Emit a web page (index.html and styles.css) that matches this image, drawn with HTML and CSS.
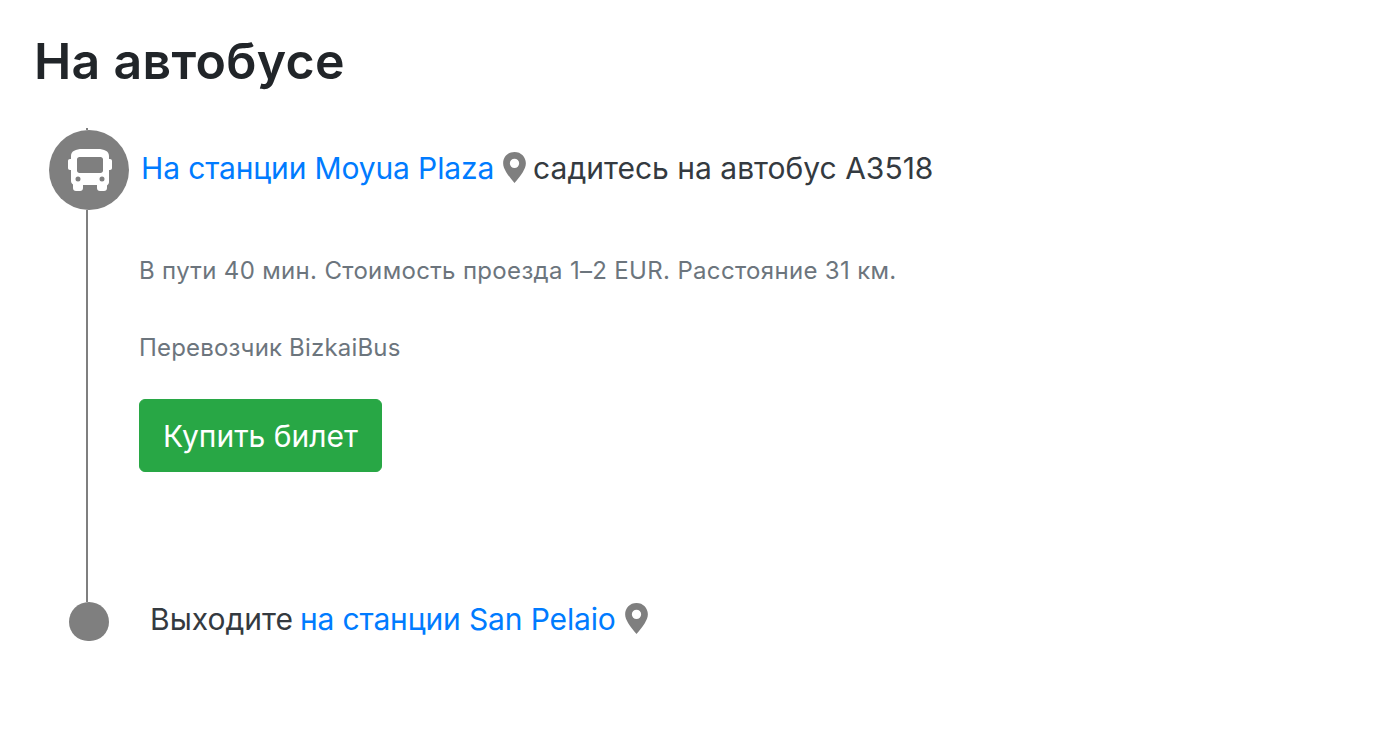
FILE: index.html
```html
<!DOCTYPE html>
<html lang="ru">
<head>
<meta charset="utf-8">
<title>На автобусе</title>
<link rel="stylesheet" href="styles.css">
</head>
<body>
<main class="page">
  <h1 class="title">На автобусе</h1>
  <section class="route">
    <div class="rail">
      <span class="stub"></span>
      <span class="stop">
        <svg class="bus" viewBox="0 0 44 42" width="44" height="42" aria-hidden="true">
          <path fill="#fff" fill-rule="evenodd" d="M14 0h16c6 0 11 2 11 7v3h1c1.200 0 2 .8 2 2v7c0 1.200-.8 2-2 2h-1v12c0 1.600-.8 2.800-2 3.400V39c0 1.800-1.200 3-3 3h-4c-1.800 0-3-1.200-3-3v-3H15v3c0 1.800-1.200 3-3 3H8c-1.800 0-3-1.200-3-3v-3.600c-1.200-.6-2-1.800-2-3.400V21H2c-1.200 0-2-.8-2-2v-7c0-1.200.8-2 2-2h1V7c0-5 5-7 11-7zM11.500 8C10 8 9 9 9 10.500v11C9 23 10 24 11.500 24h21c1.500 0 2.500-1 2.500-2.500v-11C35 9 34 8 32.500 8zM10 27.500a2.500 2.500 0 1 0 0 5 2.500 2.500 0 0 0 0-5zm24 0a2.500 2.500 0 1 0 0 5 2.500 2.500 0 0 0 0-5z"/>
        </svg>
      </span>
      <span class="line"></span>
      <span class="end"></span>
    </div>
    <div class="content">
      <p class="step step-first"><a class="link">На станции Moyua Plaza</a>
        <svg class="pin" viewBox="1 1 22 30" width="23" height="31" aria-hidden="true"><path fill="#7f7f7f" fill-rule="evenodd" d="M12 1C5.600 1 1 5.800 1 12c0 3 1.200 5.600 3 8.500 2.200 3.500 5.300 7.300 8 10.500 2.700-3.200 5.800-7 8-10.500 1.800-2.900 3-5.500 3-8.500C23 5.800 18.400 1 12 1zm0 6.500a4.500 4.500 0 1 1 0 9 4.500 4.500 0 0 1 0-9z"/></svg>
        садитесь на автобус A3518</p>
      <p class="note note-time">В пути 40 мин. Стоимость проезда 1–2 EUR. Расстояние 31 км.</p>
      <p class="note note-carrier">Перевозчик BizkaiBus</p>
      <a class="buy">Купить билет</a>
      <p class="step step-last">Выходите <a class="link">на станции San Pelaio</a>
        <svg class="pin" viewBox="1 1 22 30" width="23" height="31" aria-hidden="true"><path fill="#7f7f7f" fill-rule="evenodd" d="M12 1C5.600 1 1 5.800 1 12c0 3 1.200 5.600 3 8.500 2.200 3.500 5.300 7.300 8 10.500 2.700-3.200 5.800-7 8-10.500 1.800-2.900 3-5.500 3-8.500C23 5.800 18.400 1 12 1zm0 6.500a4.500 4.500 0 1 1 0 9 4.500 4.500 0 0 1 0-9z"/></svg></p>
    </div>
  </section>
</main>
</body>
</html>
```

FILE: styles.css
```css
* { box-sizing: border-box; }
html, body { margin: 0; background: #fff; }
body {
  font-family: Inter, "Noto Sans", sans-serif;
  color: #343a40;
  overflow: hidden;
}
.page { height: 731px; padding: 31px 0 0 34px; }
.title {
  margin: 0;
  font-size: 50px;
  line-height: 60px;
  font-weight: 600;
  letter-spacing: 0.3px;
  color: #212529;
}
.route {
  display: flex;
  margin: 37px 0 0 15px;
  height: 513px;
}
.rail {
  width: 80px;
  flex: none;
  display: flex;
  flex-direction: column;
}
.stub { width: 2px; height: 2px; margin-left: 37px; background: #7f7f7f; flex: none; }
.stop {
  width: 80px;
  height: 80px;
  flex: none;
  border-radius: 50%;
  background: #7f7f7f;
  display: flex;
  align-items: center;
  justify-content: center;
}
.bus { margin-left: 1px; }
.line { width: 2px; flex: 1; margin-left: 37px; background: #7f7f7f; }
.end {
  width: 40px;
  height: 39px;
  flex: none;
  margin-left: 20px;
  border-radius: 20px 20px 19px 19px;
  background: #7f7f7f;
}
.content { flex: 1; min-width: 0; padding-left: 10px; }
.step {
  margin: 0;
  font-size: 30px;
  line-height: 40px;
  display: flex;
  align-items: center;
  gap: 7px;
  white-space: nowrap;
}
.step-first { padding: 20px 0 0 2px; }
.step-last { padding: 127px 0 0 11px; }
.link { color: #007bff; letter-spacing: -0.14px; }
.pin { flex: none; margin: 0 0 2px 2px; }
.note { margin: 0; font-size: 24px; line-height: 30px; letter-spacing: 0.33px; color: #6c757d; }
.note-time { margin-top: 68px; }
.note-carrier { margin-top: 47px; letter-spacing: 0.18px; }
.buy {
  display: inline-block;
  margin-top: 36px;
  width: 243px;
  height: 73px;
  line-height: 73px;
  text-align: center;
  font-size: 30px;
  color: #fff;
  background: #28a745;
  border: 1px solid #28a745;
  border-radius: 6px;
}
```
